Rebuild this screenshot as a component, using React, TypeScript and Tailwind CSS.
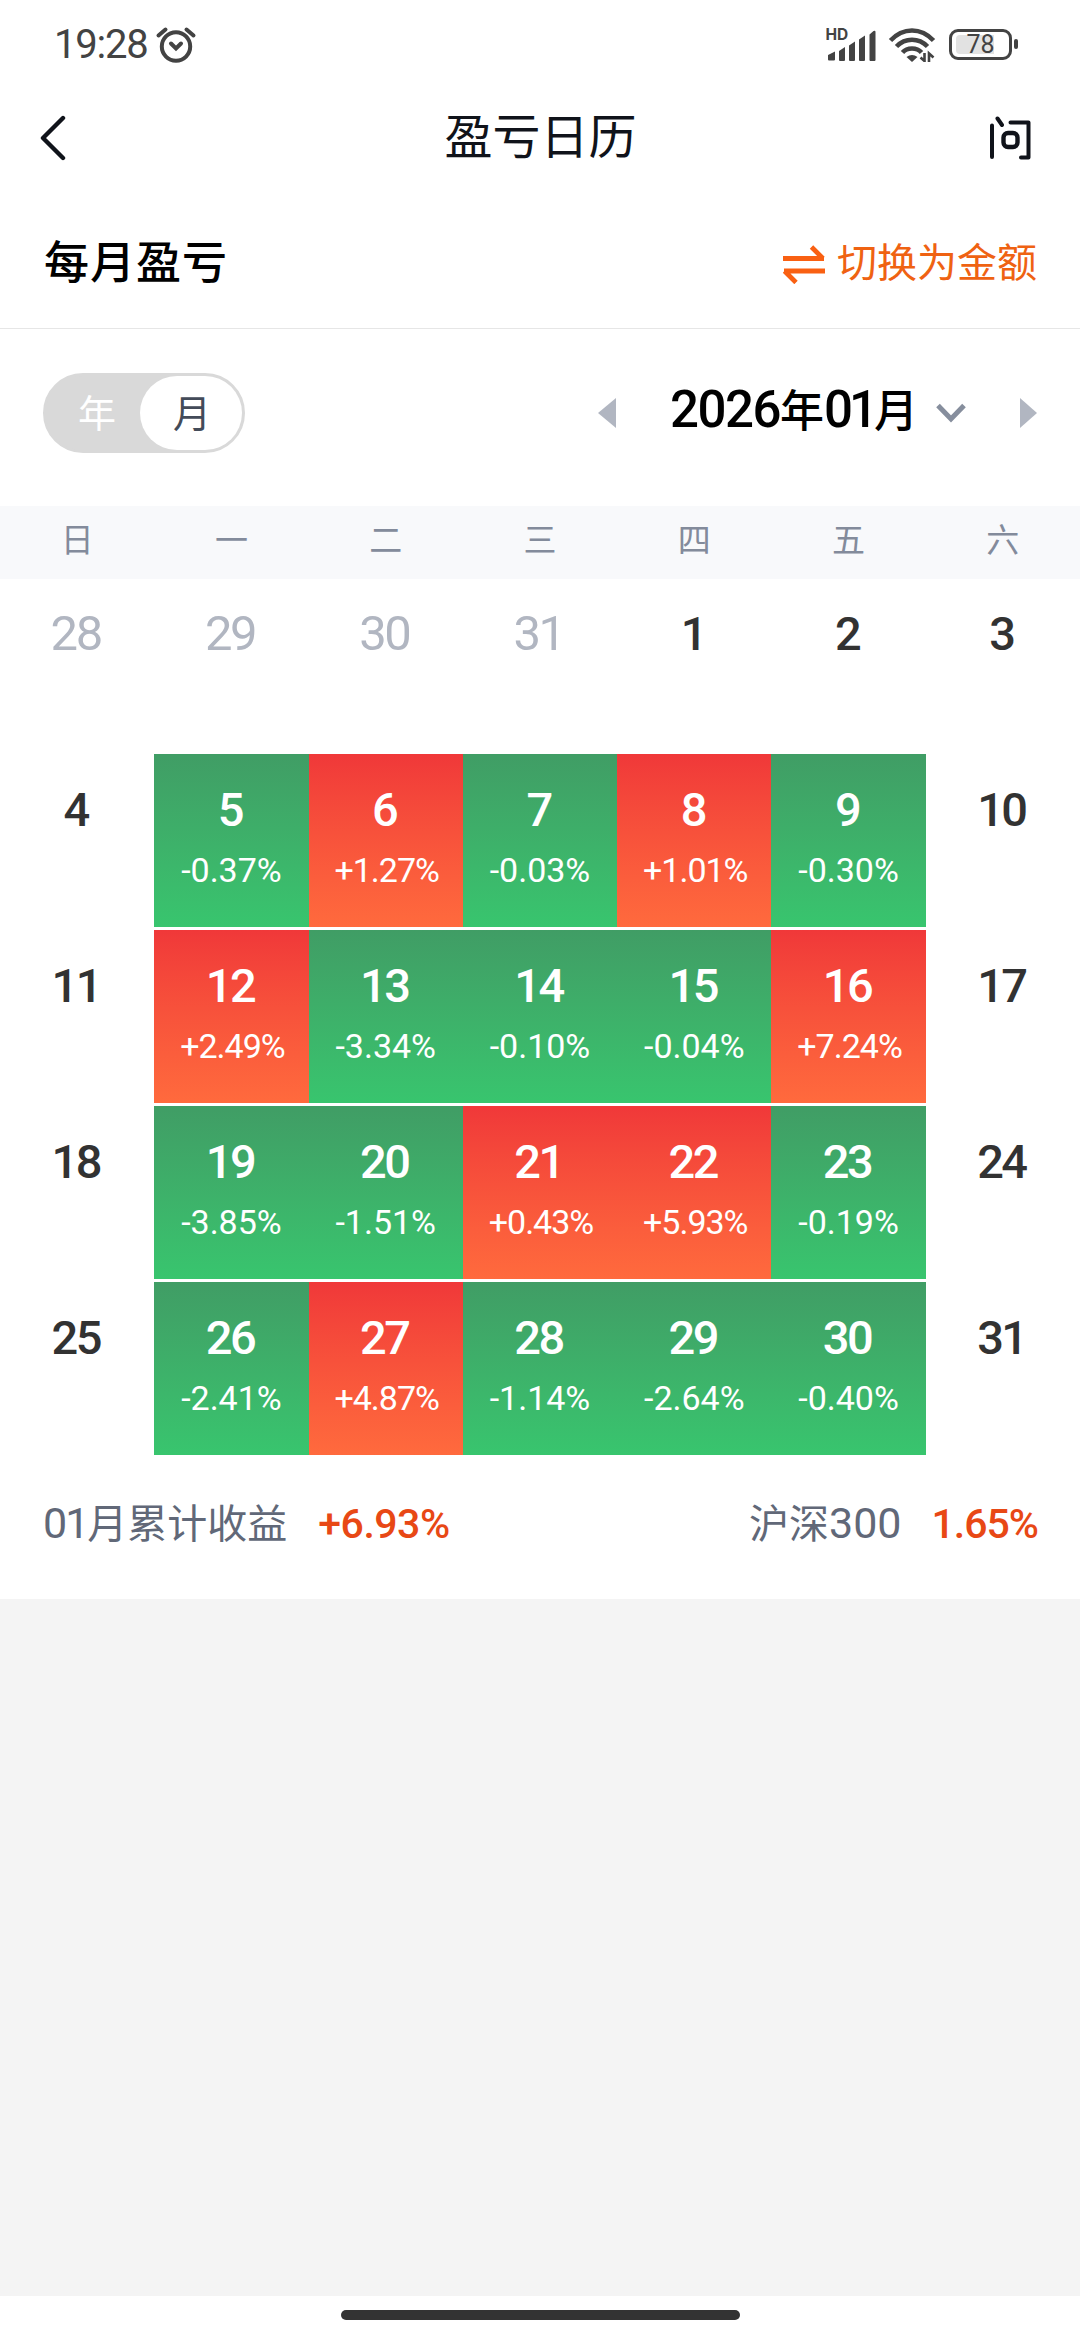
import clsx from "clsx";

const weekDays = ["日", "一", "二", "三", "四", "五", "六"];

type Day = { day: number; rate?: string; muted?: boolean };

const days: Day[] = [
  { day: 28, muted: true },
  { day: 29, muted: true },
  { day: 30, muted: true },
  { day: 31, muted: true },
  { day: 1 },
  { day: 2 },
  { day: 3 },
  { day: 4 },
  { day: 5, rate: "-0.37%" },
  { day: 6, rate: "+1.27%" },
  { day: 7, rate: "-0.03%" },
  { day: 8, rate: "+1.01%" },
  { day: 9, rate: "-0.30%" },
  { day: 10 },
  { day: 11 },
  { day: 12, rate: "+2.49%" },
  { day: 13, rate: "-3.34%" },
  { day: 14, rate: "-0.10%" },
  { day: 15, rate: "-0.04%" },
  { day: 16, rate: "+7.24%" },
  { day: 17 },
  { day: 18 },
  { day: 19, rate: "-3.85%" },
  { day: 20, rate: "-1.51%" },
  { day: 21, rate: "+0.43%" },
  { day: 22, rate: "+5.93%" },
  { day: 23, rate: "-0.19%" },
  { day: 24 },
  { day: 25 },
  { day: 26, rate: "-2.41%" },
  { day: 27, rate: "+4.87%" },
  { day: 28, rate: "-1.14%" },
  { day: 29, rate: "-2.64%" },
  { day: 30, rate: "-0.40%" },
  { day: 31 },
];

const StatusBar = () => (
  <div className="flex h-[88px] items-center pl-[54px] pr-[62px] text-[#434343]">
    <span className="pt-px text-[40px] leading-[88px] tracking-[-1.2px]">19:28</span>
    <svg className="ml-[7px] mt-px" width="42" height="40" viewBox="0 0 42 40" fill="none" stroke="currentColor" strokeLinecap="round">
      <circle cx="21" cy="21.5" r="14.2" strokeWidth="4" />
      <path d="M16 18.5l5 5 5-5" strokeWidth="4" />
      <path d="M3.5 10.5L10.5 4.5M38.5 10.5L31.5 4.5" strokeWidth="4" />
    </svg>
    <div className="flex-1" />
    <svg width="50" height="36" viewBox="0 0 50 36" fill="currentColor">
      <text x="-0.5" y="14" fontSize="15.5" fontWeight="700" fontFamily="Inter, sans-serif">HD</text>
      <path d="M2 34v-5l7-3.5v8q0 1-1 1H3q-1 0-1-1zM13 25l6-4v13q0 1-1 1h-4q-1 0-1-1zM23 19.5l6-4V34q0 1-1 1h-4q-1 0-1-1zM33 13.5l6-4V34q0 1-1 1h-4q-1 0-1-1zM43.500 8.500l4-3.500q2-1 2 1V34q0 1-1 1h-4q-1 0-1-1z" />
    </svg>
    <svg className="ml-[12px]" width="48" height="36" viewBox="0 0 48 36" fill="none" stroke="currentColor" strokeWidth="4.6">
      <path d="M2.5 14.5Q12 4.500 24 4.500T45.500 14.500" />
      <path d="M8.500 20.500Q15 13.800 24 13.800T39.500 20.500" />
      <path d="M14.500 26.500Q18 22.500 24 22.500T33.500 26.500" />
      <path d="M18.500 31q5.500-4 11 0L24 36z" fill="currentColor" stroke="none" />
      <path d="M36.500 27v8l-4-3.500M41 36.500v-9l4.500 4" strokeWidth="2.600" />
    </svg>
    <div className="relative ml-[13px] flex h-[31px] w-[63px] items-center justify-center rounded-[9px] border-[3px] border-[#434343]">
      <div className="absolute left-[4px] top-[3px] h-[19px] w-[38px] rounded-l-[4px] bg-[#e2e2e2]" />
      <span className="relative text-[25px] leading-none">78</span>
    </div>
    <div className="ml-[2px] h-[10px] w-[4px] rounded-full bg-[#434343]" />
  </div>
);

const NavBar = () => (
  <div className="flex h-[100px] items-center justify-between pl-[40px] pr-[49px] text-[#10131a]">
    <svg width="28" height="46" viewBox="0 0 28 46" fill="none" stroke="currentColor" strokeWidth="4.4" strokeLinecap="round" strokeLinejoin="round">
      <path d="M23 3L3 23l20 20" />
    </svg>
    <h1 className="pl-[24px] text-[48px] leading-none">盈亏日历</h1>
    <svg width="42" height="46" viewBox="0 0 42 46" fill="none" stroke="currentColor" strokeWidth="4" strokeLinecap="round" strokeLinejoin="round">
      <path d="M3 10.500V42M8.500 3.500l4.500 6.500M21.500 7.500H39.500V42.500H32" />
      <rect x="14.500" y="18" width="14" height="14" rx="4.500" strokeWidth="4.400" />
    </svg>
  </div>
);

const SectionHeader = () => (
  <div className="flex h-[141px] items-center justify-between border-b border-[#e6e6e6] pl-[44px] pr-[43px] pt-[11px]">
    <h2 className="text-[45px] font-medium leading-none tracking-[1px] text-black">每月盈亏</h2>
    <button className="flex items-center gap-[12px] text-[#ef6212]">
      <svg width="42" height="40" viewBox="0 0 42 40" fill="none" stroke="#f96012" strokeWidth="4.800">
        <path d="M0 14.500H41M28.500 3L40 14.500M42 27H1M13 38.500L1.500 27" />
      </svg>
      <span className="text-[40px] leading-none">切换为金额</span>
    </button>
  </div>
);

const Toolbar = () => (
  <div className="flex h-[177px] items-start justify-between pl-[43px] pr-[42px] pt-[44px]">
    <div className="flex h-[80px] w-[202px] rounded-full border-[3px] border-[#d9d9d9] bg-[#d9d9d9] text-[38px]">
      <span className="flex flex-1 items-center justify-center pl-[8px] pt-[2px] text-white">年</span>
      <span className="flex w-[102px] items-center justify-center rounded-full bg-white pl-[2px] pt-[2px] text-[#434b59]">月</span>
    </div>
    <div className="flex h-[80px] items-center">
      <svg width="18" height="30" viewBox="0 0 18 30" fill="#b1b6c1">
        <path d="M18 0v30L0 15z" />
      </svg>
      <div className="ml-[54px] flex items-baseline pb-[5px] text-[44px] font-medium leading-[74px] text-black">
        <span className="text-[51px] tracking-[-1.5px]">2026</span>
        <span>年</span>
        <span className="text-[51px] tracking-[-4px]">01</span>
        <span>月</span>
      </div>
      <svg className="ml-[18px]" width="30" height="20" viewBox="0 0 30 20" fill="none" stroke="#868e9d" strokeWidth="5">
        <path d="M2 2.500l13 13.500 13-13.500" />
      </svg>
      <svg className="ml-[54px]" width="18" height="30" viewBox="0 0 18 30" fill="#b1b6c1">
        <path d="M0 0v30l17-15z" />
      </svg>
    </div>
  </div>
);

const DayCell = ({ day, rate, muted }: Day) => (
  <div
    className={clsx(
      "flex h-[173px] flex-col items-center pt-[27px]",
      !rate && !muted && "text-[#323232]",
      muted && "text-[#b1b6c1]",
      rate && "text-white",
      rate?.startsWith("+") && "bg-linear-to-b from-[#f03839] to-[#ff6a3d]",
      rate?.startsWith("-") && "bg-linear-to-b from-[#409d65] to-[#38c56e]"
    )}
  >
    <span className={clsx("-ml-[3px] leading-[58px] tracking-[-2.5px]", muted ? "text-[49px]" : "text-[47px] font-medium")}>{day}</span>
    {rate && (
      <span className={clsx("text-[34px] leading-[62px]", rate.startsWith("+") && "pl-[2px] tracking-[-1px]")}>{rate}</span>
    )}
  </div>
);

const Summary = () => (
  <div className="flex h-[144px] items-baseline justify-between pl-[43px] pr-[42px] text-[40px] leading-[136px] text-[#616878]">
    <div className="flex items-baseline">
      <span className="text-[43px] tracking-[-2px]">01</span>
      <span>月累计收益</span>
      <span className="ml-[31px] text-[41px] font-medium tracking-[-0.5px] text-[#e84815]">+6.93%</span>
    </div>
    <div className="flex items-baseline">
      <span>沪深</span>
      <span className="text-[43px]">300</span>
      <span className="ml-[30px] text-[41px] font-medium tracking-[-1px] text-[#e84815]">1.65%</span>
    </div>
  </div>
);

export default function App() {
  return (
    <div className="flex h-[2340px] w-[1080px] flex-col overflow-hidden bg-white font-[Roboto,'Noto_Sans_CJK_SC',sans-serif]">
      <StatusBar />
      <NavBar />
      <SectionHeader />
      <Toolbar />
      <div className="grid h-[73px] grid-cols-7 bg-[#f8f9fb] text-center text-[33px] leading-[69px] text-[#838b9b]">
        {weekDays.map((name) => (
          <span key={name}>{name}</span>
        ))}
      </div>
      <div className="-mt-px grid grid-cols-7 gap-y-[3px]">
        {days.map((item, i) => (
          <DayCell key={i} {...item} />
        ))}
      </div>
      <Summary />
      <div className="flex-1 bg-[#f4f4f4]" />
      <div className="flex h-[44px] justify-center pt-[14px]">
        <div className="h-[10px] w-[399px] rounded-full bg-[#333333]" />
      </div>
    </div>
  );
}
